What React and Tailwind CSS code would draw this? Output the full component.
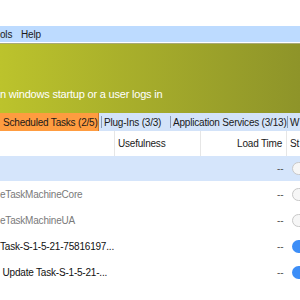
export default function App() {
  const rows = [
    { name: "eTaskMachineCore", gray: true, on: false },
    { name: "eTaskMachineUA", gray: true, on: false },
    { name: "Task-S-1-5-21-75816197...", gray: false, on: true },
    { name: " Update Task-S-1-5-21-...", gray: false, on: true },
  ];
  const Toggle = ({ on }) =>
    on ? (
      <div className="h-[13px] w-[20px] shrink-0 rounded-full bg-[#3d8ef7]" />
    ) : (
      <div className="h-[13px] w-[20px] shrink-0 rounded-full border border-[#c8c8c8] bg-[#f6f6f6]" />
    );
  return (
    <div
      className="flex h-[300px] w-[300px] flex-col overflow-hidden whitespace-nowrap bg-white text-[10px] tracking-[-0.2px] text-[#1a1a1a]"
      style={{ fontFamily: '"Liberation Sans", Arial, sans-serif' }}
    >
      <div className="h-[26px] shrink-0 bg-white" />
      <div className="flex h-[16px] shrink-0 items-center bg-[#bddbff]">
        <span className="w-[21px]">ols</span>
        <span>Help</span>
      </div>
      <div className="h-[1px] shrink-0 bg-white" />
      <div className="h-[1px] shrink-0 bg-[#a9ab7a]" />
      <div className="flex h-[69px] shrink-0 items-end bg-gradient-to-r from-[#bcc32c] to-[#8e9429] pb-[11px] text-[11px] text-white">
        <span>n windows startup or a user logs in</span>
      </div>
      <div className="flex h-[18px] shrink-0 items-stretch bg-[#d3e3f9]">
        <div className="flex w-[99px] shrink-0 items-center border-r border-[#d07a2a] bg-[#ff9c40] pl-[3px]">
          Scheduled Tasks (2/5)
        </div>
        <div className="mx-[2px] my-[3px] w-px shrink-0 bg-[#8a9bb5]" />
        <div className="flex w-[64px] shrink-0 items-center">Plug-Ins (3/3)</div>
        <div className="mx-[2px] my-[3px] w-px shrink-0 bg-[#8a9bb5]" />
        <div className="flex w-[112px] shrink-0 items-center">Application Services (3/13)</div>
        <div className="mx-[2px] my-[3px] w-px shrink-0 bg-[#8a9bb5]" />
        <div className="flex shrink-0 items-center">W</div>
      </div>
      <div className="flex h-[25px] shrink-0 items-stretch bg-white">
        <div className="w-[115px] shrink-0 border-r border-[#e6e6e6]" />
        <div className="flex w-[86px] shrink-0 items-center border-r border-[#e6e6e6] pl-[3px]">Usefulness</div>
        <div className="flex w-[86px] shrink-0 items-center justify-end border-r border-[#e6e6e6] pr-[4px]">Load Time</div>
        <div className="flex items-center pl-[3px]">St</div>
      </div>
      <div className="flex h-[25px] shrink-0 items-center bg-[#d5e5fb]">
        <div className="w-[277px] shrink-0" />
        <span className="w-[15px] shrink-0 text-[#555]">--</span>
        <Toggle on={false} />
      </div>
      {rows.map((r, i) => (
        <div key={i} className="flex h-[26px] shrink-0 items-center pt-[1px]">
          <div className={`w-[277px] shrink-0 whitespace-pre ${r.gray ? "text-[#7a7a7a]" : "text-[#111]"}`}>{r.name}</div>
          <span className="w-[15px] shrink-0 text-[#555]">--</span>
          <Toggle on={r.on} />
        </div>
      ))}
    </div>
  );
}
